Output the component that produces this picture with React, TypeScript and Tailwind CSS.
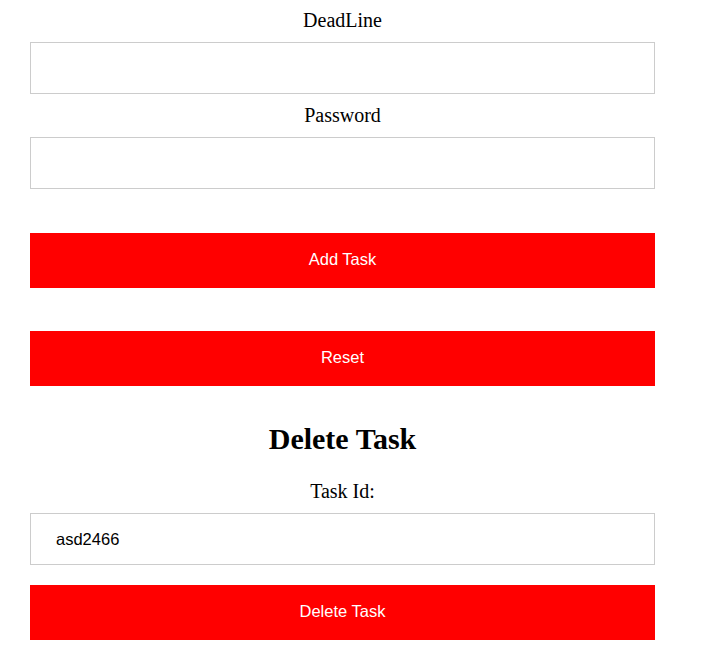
import React from "react";

const serif = "font-['Liberation_Serif','Times_New_Roman',serif]";
const sans = "font-['Liberation_Sans',Arial,sans-serif]";

function Field({ label, value, first }: { label: string; value?: string; first?: boolean }) {
  return (
    <>
      <label
        className={`${serif} block text-center text-[20px] leading-[23px] text-black ${
          first ? "mt-[9px]" : "mt-[10px]"
        } mb-[10px]`}
      >
        {label}
      </label>
      <input
        type="text"
        defaultValue={value}
        className={`${sans} block w-full h-[52px] border border-[#cccccc] bg-white pl-[25px] text-[16.5px] text-black outline-none`}
      />
    </>
  );
}

function RedButton({ children }: { children: React.ReactNode }) {
  return (
    <button
      className={`${sans} flex w-full h-[55px] items-center justify-center pb-[2px] bg-[#ff0000] text-[16.5px] text-white`}
    >
      {children}
    </button>
  );
}

export default function App() {
  return (
    <div className="min-h-screen bg-white">
      <div className="ml-[30px] w-[625px] flex flex-col">
        <Field label="DeadLine" first />
        <Field label="Password" />

        <div className="mt-[44px]">
          <RedButton>Add Task</RedButton>
        </div>
        <div className="mt-[43px]">
          <RedButton>Reset</RedButton>
        </div>

        <h2
          className={`${serif} mt-[36px] text-center text-[30px] leading-[33px] font-bold text-black`}
        >
          Delete Task
        </h2>

        <label
          className={`${serif} block text-center text-[20px] leading-[23px] text-black mt-[25px] mb-[10px]`}
        >
          Task Id:
        </label>
        <input
          type="text"
          defaultValue="asd2466"
          className={`${sans} block w-full h-[52px] border border-[#cccccc] bg-white pl-[25px] text-[16.5px] text-black outline-none`}
        />

        <div className="mt-[20px]">
          <RedButton>Delete Task</RedButton>
        </div>
      </div>
    </div>
  );
}
